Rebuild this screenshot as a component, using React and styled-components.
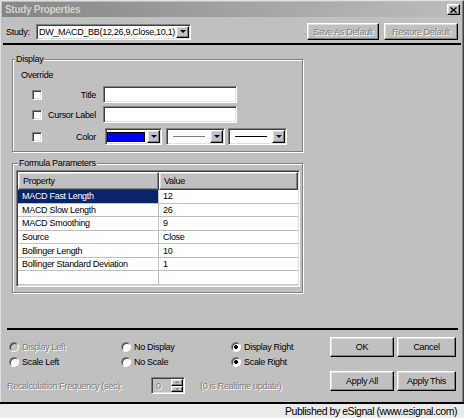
import React from 'react';
import styled, { createGlobalStyle, css } from 'styled-components';

const GlobalStyle = createGlobalStyle`
  html, body {
    margin: 0;
    padding: 0;
    background: #c0c0c0;
  }
  body {
    font-family: "Liberation Sans", Arial, sans-serif;
  }
`;

const sunken = css`
  box-sizing: border-box;
  border: 1px solid;
  border-color: #808080 #fff #fff #808080;
  box-shadow: inset 1px 1px #404040, inset -1px -1px #dfdfdf;
`;

const raised = css`
  box-sizing: border-box;
  background: #c0c0c0;
  border: 1px solid;
  border-color: #fff #000 #000 #fff;
  box-shadow: inset -1px -1px #808080, inset 1px 1px #dfdfdf;
`;

const etched = css`
  color: #808080;
  text-shadow: 1px 1px 0 #fff;
`;

const Frame = styled.div`
  width: 464px;
  height: 418px;
  display: flex;
  flex-direction: column;
  font-family: "Liberation Sans", Arial, sans-serif;
  font-size: 9px;
  letter-spacing: -0.3px;
  color: #000;
  overflow: hidden;
`;

const Window = styled.div`
  box-sizing: border-box;
  height: 402px;
  display: flex;
  flex-direction: column;
  background: #c0c0c0;
  border-top: 1px solid #dfdfdf;
  border-left: 1px solid #dfdfdf;
  border-right: 1px solid #404040;
  box-shadow: inset -1px 0 #808080;
  padding: 1px 1px 0 1px;
`;

const TitleBar = styled.div`
  height: 15px;
  display: flex;
  align-items: center;
  justify-content: space-between;
  padding: 0 2px 0 3px;
  background: linear-gradient(to right, #868686, #bdbdbd);
`;

const Title = styled.span`
  font-size: 10px;
  font-weight: bold;
  letter-spacing: -0.3px;
  color: #d4d0c8;
`;

const CloseBox = styled.div`
  ${raised};
  width: 13px;
  height: 11px;
  display: flex;
  align-items: center;
  justify-content: center;
`;

const StudyRow = styled.div`
  display: flex;
  align-items: center;
  height: 17px;
  margin-top: 6px;
  padding: 0 4px 0 4px;
`;

const FieldLabel = styled.span`
  width: ${(p) => p.$w}px;
  text-align: ${(p) => p.$align || 'left'};
  white-space: nowrap;
`;

const Combo = styled.div`
  ${sunken};
  background: #fff;
  width: ${(p) => p.$w}px;
  height: ${(p) => p.$h}px;
  margin-left: ${(p) => p.$ml || 0}px;
  padding: 1px;
  display: flex;
  align-items: center;
  overflow: hidden;
`;

const ComboText = styled.span`
  flex: 1;
  padding-left: 1px;
  white-space: nowrap;
  overflow: hidden;
`;

const DropButton = styled.div`
  ${raised};
  flex: none;
  width: 13px;
  align-self: stretch;
  display: flex;
  align-items: center;
  justify-content: center;
`;

const Arrow = styled.span`
  width: 0;
  height: 0;
  border-left: 3px solid transparent;
  border-right: 3px solid transparent;
  border-top: 3px solid ${(p) => p.$color || '#000'};
`;

const Swatch = styled.div`
  width: 39px;
  height: 10px;
  box-sizing: border-box;
  border: 1px solid #000;
  background: ${(p) => p.$color};
  margin-right: 2px;
`;

const LineSample = styled.div`
  flex: none;
  width: 32px;
  margin: 0 auto 0 5px;
  border-top: 1px solid ${(p) => p.$color};
`;

const Spacer = styled.div`
  flex: 1;
`;

const Button = styled.button`
  ${raised};
  appearance: none;
  font: inherit;
  letter-spacing: inherit;
  width: ${(p) => p.$w}px;
  height: ${(p) => p.$h}px;
  margin-left: ${(p) => p.$ml || 0}px;
  padding: 0;
  color: #000;
  ${(p) => p.disabled && etched};
`;

const Rule = styled.div`
  height: 2px;
  background: #000;
  margin: ${(p) => p.$m};
`;

const Main = styled.div`
  padding-left: 10px;
`;

const GroupBox = styled.fieldset`
  box-sizing: border-box;
  width: 291px;
  min-width: 0;
  margin: ${(p) => p.$top}px 0 0 0;
  padding: 0 0 ${(p) => p.$bottom}px 0;
  border: 1px solid #808080;
  box-shadow: inset 1px 1px #fff, 1px 1px #fff;
`;

const Legend = styled.legend`
  margin-left: ${(p) => p.$indent}px;
  padding: 0 1px;
  line-height: 11px;
  background: #c0c0c0;
`;

const Override = styled.div`
  line-height: 11px;
  margin: 5px 0 5px 8px;
`;

const FieldRow = styled.div`
  display: flex;
  align-items: center;
  height: 17px;
  margin-top: ${(p) => p.$mt || 0}px;
  padding-left: 19px;
`;

const CheckBox = styled.div`
  ${sunken};
  flex: none;
  width: 10px;
  height: 10px;
  background: #fff;
`;

const TextBox = styled.div`
  ${sunken};
  background: #fff;
  width: 134px;
  height: 17px;
  margin-left: 7px;
`;

const ListView = styled.div`
  ${sunken};
  background: #fff;
  width: 284px;
  height: 117px;
  margin: 1px 0 0 3px;
  padding: 1px;
  overflow: hidden;
`;

const ListRow = styled.div`
  display: grid;
  grid-template-columns: 141px 1fr;
  height: ${(p) => (p.$header ? 18 : 13.57)}px;
`;

const HeaderCell = styled.div`
  ${raised};
  border-color: #fff #404040 #404040 #fff;
  display: flex;
  align-items: center;
  padding-left: 4px;
`;

const Cell = styled.div`
  box-sizing: border-box;
  display: flex;
  align-items: center;
  padding-left: 4px;
  border-bottom: 1px solid #c0c0c0;
  border-right: ${(p) => (p.$first ? '1px solid #c0c0c0' : 'none')};
  background: ${(p) => (p.$selected ? '#0a246a' : 'transparent')};
  color: ${(p) => (p.$selected ? '#fff' : '#000')};
  white-space: nowrap;
`;

const Bottom = styled.div`
  flex: 1;
  display: flex;
`;

const LeftPane = styled.div`
  flex: 1;
  padding-left: 5px;
`;

const RadioGrid = styled.div`
  display: grid;
  grid-template-columns: 112px 110px auto;
  grid-auto-rows: 15px;
  margin: 9px 0 0 2px;
`;

const RadioItem = styled.label`
  display: flex;
  align-items: center;
  white-space: nowrap;
  ${(p) => p.$disabled && etched};
`;

const RadioDot = styled.span`
  flex: none;
  box-sizing: border-box;
  width: 10px;
  height: 10px;
  margin-right: 3px;
  border-radius: 50%;
  border: 1px solid;
  border-color: #808080 #fff #fff #808080;
  box-shadow: inset 1px 1px #404040;
  text-shadow: none;
  background: ${(p) =>
    p.$checked
      ? 'radial-gradient(circle, #000 0 1.6px, #fff 2.2px)'
      : p.$disabled
      ? '#c0c0c0'
      : '#fff'};
`;

const RecalcRow = styled.div`
  display: flex;
  align-items: center;
  height: 17px;
  margin-top: 8px;
`;

const Muted = styled.span`
  ${etched};
  width: ${(p) => (p.$w ? `${p.$w}px` : 'auto')};
  margin-left: ${(p) => p.$ml || 0}px;
  white-space: nowrap;
`;

const SpinBox = styled.div`
  ${sunken};
  width: 34px;
  height: 17px;
  padding: 1px;
  display: flex;
  align-items: stretch;
`;

const SpinValue = styled.span`
  ${etched};
  flex: 1;
  display: flex;
  align-items: center;
  padding-left: 3px;
`;

const SpinButtons = styled.div`
  width: 12px;
  display: flex;
  flex-direction: column;
`;

const SpinHalf = styled.div`
  ${raised};
  flex: 1;
  display: flex;
  align-items: center;
  justify-content: center;
`;

const SpinArrow = styled.span`
  width: 0;
  height: 0;
  border-left: 2px solid transparent;
  border-right: 2px solid transparent;
  ${(p) => (p.$up ? 'border-bottom' : 'border-top')}: 2px solid #808080;
`;

const ButtonGrid = styled.div`
  display: grid;
  grid-template-columns: 64px 59px;
  grid-auto-rows: 20px;
  column-gap: 3px;
  row-gap: 14px;
  padding: 7px 6px 0 0;
  align-content: start;
`;

const StatusBar = styled.div`
  flex: 1;
  box-sizing: border-box;
  border-top: 2px solid #000;
  background: #ebebeb;
  display: flex;
  align-items: center;
  justify-content: flex-end;
  padding-right: 7px;
  font-size: 10.5px;
  letter-spacing: -0.45px;
`;

const params = [
  ['MACD Fast Length', '12'],
  ['MACD Slow Length', '26'],
  ['MACD Smoothing', '9'],
  ['Source', 'Close'],
  ['Bollinger Length', '10'],
  ['Bollinger Standard Deviation', '1'],
  ['', ''],
];

const Radio = ({ label, checked, disabled }) => (
  <RadioItem $disabled={disabled}>
    <RadioDot $checked={checked} $disabled={disabled} />
    {label}
  </RadioItem>
);

const App = () => {
  return (
    <Frame>
      <GlobalStyle />
      <Window>
        <TitleBar>
          <Title>Study Properties</Title>
          <CloseBox>
            <svg width="7" height="6" viewBox="0 0 7 6">
              <path d="M0.5 0.5 L6.5 5.5 M6.5 0.5 L0.5 5.5" stroke="#000" strokeWidth="1.4" />
            </svg>
          </CloseBox>
        </TitleBar>

        <StudyRow>
          <FieldLabel $w={30}>Study:</FieldLabel>
          <Combo $w={155} $h={16}>
            <ComboText>DW_MACD_BB(12,26,9,Close,10,1)</ComboText>
            <DropButton>
              <Arrow />
            </DropButton>
          </Combo>
          <Spacer />
          <Button $w={72} $h={17} disabled>
            Save As Default
          </Button>
          <Button $w={74} $h={17} $ml={5} disabled>
            Restore Default
          </Button>
        </StudyRow>

        <Rule $m="3px 1px 0 1px" />

        <Main>
          <GroupBox $top={9} $bottom={6}>
            <Legend $indent={2}>Display</Legend>
            <Override>Override</Override>
            <FieldRow>
              <CheckBox />
              <FieldLabel $w={54} $align="right">Title</FieldLabel>
              <TextBox />
            </FieldRow>
            <FieldRow $mt={3}>
              <CheckBox />
              <FieldLabel $w={54} $align="right">Cursor Label</FieldLabel>
              <TextBox />
            </FieldRow>
            <FieldRow $mt={5}>
              <CheckBox />
              <FieldLabel $w={54} $align="right">Color</FieldLabel>
              <Combo $w={57} $h={17} $ml={9}>
                <Swatch $color="#0000ff" />
                <DropButton>
                  <Arrow $color="#000080" />
                </DropButton>
              </Combo>
              <Combo $w={59} $h={17} $ml={4}>
                <LineSample $color="#7a7a7a" />
                <DropButton>
                  <Arrow $color="#000080" />
                </DropButton>
              </Combo>
              <Combo $w={59} $h={17} $ml={3}>
                <LineSample $color="#000" />
                <DropButton>
                  <Arrow $color="#000080" />
                </DropButton>
              </Combo>
            </FieldRow>
          </GroupBox>

          <GroupBox $top={6} $bottom={5}>
            <Legend $indent={5}>Formula Parameters</Legend>
            <ListView>
              <ListRow $header>
                <HeaderCell>Property</HeaderCell>
                <HeaderCell>Value</HeaderCell>
              </ListRow>
              {params.map(([name, value], i) => (
                <ListRow key={i}>
                  <Cell $first $selected={i === 0}>
                    {name}
                  </Cell>
                  <Cell>{value}</Cell>
                </ListRow>
              ))}
            </ListView>
          </GroupBox>
        </Main>

        <Rule $m="35px 4px 0 5px" />

        <Bottom>
          <LeftPane>
            <RadioGrid>
              <Radio label="Display Left" disabled />
              <Radio label="No Display" />
              <Radio label="Display Right" checked />
              <Radio label="Scale Left" />
              <Radio label="No Scale" />
              <Radio label="Scale Right" checked />
            </RadioGrid>
            <RecalcRow>
              <Muted $w={144}>Recalculation Frequency (sec):</Muted>
              <SpinBox>
                <SpinValue>0</SpinValue>
                <SpinButtons>
                  <SpinHalf>
                    <SpinArrow $up />
                  </SpinHalf>
                  <SpinHalf>
                    <SpinArrow />
                  </SpinHalf>
                </SpinButtons>
              </SpinBox>
              <Muted $ml={15}>(0 is Realtime update)</Muted>
            </RecalcRow>
          </LeftPane>
          <ButtonGrid>
            <Button>OK</Button>
            <Button>Cancel</Button>
            <Button>Apply All</Button>
            <Button>Apply This</Button>
          </ButtonGrid>
        </Bottom>
      </Window>
      <StatusBar>Published by eSignal (www.esignal.com)</StatusBar>
    </Frame>
  );
};

export default App;
